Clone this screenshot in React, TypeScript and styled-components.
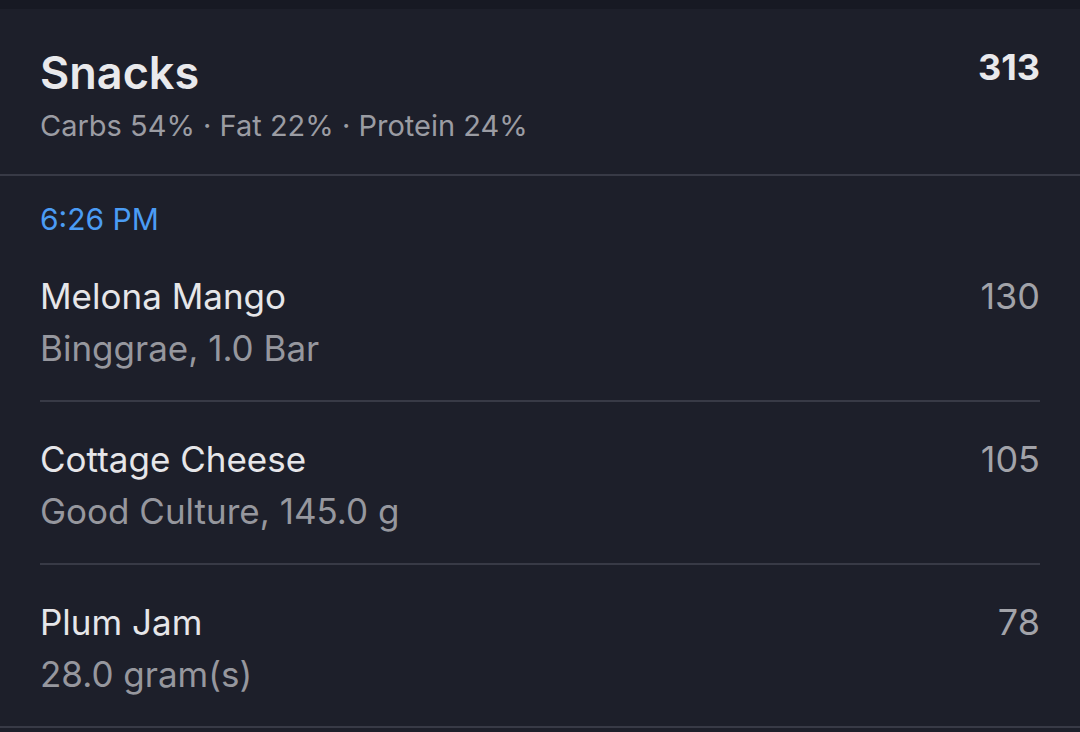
import React from 'react';
import styled, { createGlobalStyle } from 'styled-components';

const GlobalStyle = createGlobalStyle`
  html, body {
    margin: 0;
    padding: 0;
    background: #1d1f2a;
  }
  body {
    font-family: Inter, 'Noto Sans', sans-serif;
    -webkit-font-smoothing: antialiased;
  }
`;

const Screen = styled.div`
  width: 1080px;
  height: 732px;
  overflow: hidden;
  background: #1d1f2a;
  border-top: 9px solid #171923;
  box-sizing: border-box;
`;

const Header = styled.div`
  display: flex;
  justify-content: space-between;
  align-items: flex-start;
  padding: 36px 40px 28px 40px;
  border-bottom: 2px solid #383a46;
`;

const TitleBlock = styled.div`
  display: flex;
  flex-direction: column;
  gap: 5px;
`;

const Title = styled.div`
  font-size: 45px;
  line-height: 56px;
  font-weight: 600;
  color: #e9e9ec;
`;

const Macros = styled.div`
  font-size: 29px;
  line-height: 40px;
  color: #9b9ca3;
`;

const Total = styled.div`
  font-size: 36px;
  line-height: 44px;
  font-weight: 700;
  color: #e9e9ec;
`;

const TimeLabel = styled.div`
  padding: 23px 40px 0 40px;
  font-size: 30px;
  line-height: 40px;
  color: #4b9cf4;
`;

const List = styled.div`
  display: flex;
  flex-direction: column;
`;

const Row = styled.div<{ $last?: boolean }>`
  display: flex;
  justify-content: space-between;
  align-items: flex-start;
  margin: 0 ${(p) => (p.$last ? 0 : 40)}px;
  padding: 35px ${(p) => (p.$last ? 40 : 0)}px 30px;
  border-bottom: 2px solid #383a46;
`;

const RowText = styled.div`
  display: flex;
  flex-direction: column;
  gap: 8px;
`;

const Name = styled.div`
  font-size: 35px;
  line-height: 44px;
  color: #e6e6e9;
`;

const Detail = styled.div`
  font-size: 35px;
  line-height: 44px;
  color: #96979e;
`;

const Calories = styled.div`
  font-size: 36px;
  line-height: 44px;
  color: #a2a3a9;
`;

const foods = [
  { name: 'Melona Mango', detail: 'Binggrae, 1.0 Bar', kcal: 130 },
  { name: 'Cottage Cheese', detail: 'Good Culture, 145.0 g', kcal: 105 },
  { name: 'Plum Jam', detail: '28.0 gram(s)', kcal: 78 },
];

export default function App() {
  return (
    <>
      <GlobalStyle />
      <Screen>
        <Header>
          <TitleBlock>
            <Title>Snacks</Title>
            <Macros>Carbs 54% · Fat 22% · Protein 24%</Macros>
          </TitleBlock>
          <Total>313</Total>
        </Header>
        <TimeLabel>6:26 PM</TimeLabel>
        <List>
          {foods.map((f, i) => (
            <Row key={f.name} $last={i === foods.length - 1}>
              <RowText>
                <Name>{f.name}</Name>
                <Detail>{f.detail}</Detail>
              </RowText>
              <Calories>{f.kcal}</Calories>
            </Row>
          ))}
        </List>
      </Screen>
    </>
  );
}
